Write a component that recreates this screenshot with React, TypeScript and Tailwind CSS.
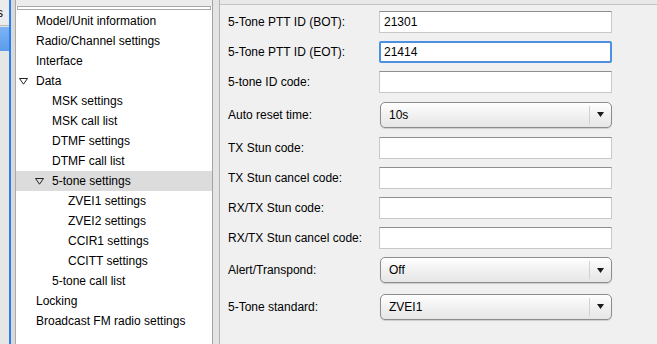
import React from "react";

type Node = { label: string; level: number; open?: boolean; selected?: boolean };

const tree: Node[] = [
  { label: "Model/Unit information", level: 0 },
  { label: "Radio/Channel settings", level: 0 },
  { label: "Interface", level: 0 },
  { label: "Data", level: 0, open: true },
  { label: "MSK settings", level: 1 },
  { label: "MSK call list", level: 1 },
  { label: "DTMF settings", level: 1 },
  { label: "DTMF call list", level: 1 },
  { label: "5-tone settings", level: 1, open: true, selected: true },
  { label: "ZVEI1 settings", level: 2 },
  { label: "ZVEI2 settings", level: 2 },
  { label: "CCIR1 settings", level: 2 },
  { label: "CCITT settings", level: 2 },
  { label: "5-tone call list", level: 1 },
  { label: "Locking", level: 0 },
  { label: "Broadcast FM radio settings", level: 0 },
];

type Field = { label: string; kind: "input" | "select"; value?: string; focus?: boolean; h: string };

const fields: Field[] = [
  { label: "5-Tone PTT ID (BOT):", kind: "input", value: "21301", h: "h-[30px]" },
  { label: "5-Tone PTT ID (EOT):", kind: "input", value: "21414", focus: true, h: "h-[30px]" },
  { label: "5-tone ID code:", kind: "input", h: "h-[30px]" },
  { label: "Auto reset time:", kind: "select", value: "10s", h: "h-[35px]" },
  { label: "TX Stun code:", kind: "input", h: "h-[32px]" },
  { label: "TX Stun cancel code:", kind: "input", h: "h-[28px]" },
  { label: "RX/TX Stun code:", kind: "input", h: "h-[32px]" },
  { label: "RX/TX Stun cancel code:", kind: "input", h: "h-[28px]" },
  { label: "Alert/Transpond:", kind: "select", value: "Off", h: "h-[36px]" },
  { label: "5-Tone standard:", kind: "select", value: "ZVEI1", h: "h-[37px]" },
];

function Disclosure() {
  return (
    <svg width="9" height="7" viewBox="0 0 9 7" className="shrink-0">
      <polygon points="0.5,0.5 8.5,0.5 4.5,6.2" fill="none" stroke="#222" strokeWidth="1" />
    </svg>
  );
}

function TextBox({ value, focus }: { value?: string; focus?: boolean }) {
  if (focus) {
    return (
      <div className="w-[233px] h-[22px] bg-white border-2 border-[#4d8fe0] rounded-[2px] flex items-center pl-[3px] text-black">
        {value}
      </div>
    );
  }
  return (
    <div className="w-[233px] h-[22px] bg-white border border-[#c9c9c9] border-t-[#8f8f8f] flex items-center pl-[4px] text-black">
      {value}
    </div>
  );
}

function Select({ value }: { value?: string }) {
  return (
    <div className="w-[232px] h-[26px] ml-px rounded-[5px] border border-[#8c8c8c] bg-gradient-to-b from-[#ffffff] via-[#f1f1f1] to-[#e6e6e6] shadow-[0_1px_1px_rgba(0,0,0,0.15)] flex items-center text-black">
      <span className="flex-1 pl-[8px]">{value}</span>
      <span className="w-px h-[18px] bg-[#d2d2d2]" />
      <span className="w-[21px] flex justify-center">
        <svg width="7" height="5" viewBox="0 0 7 5">
          <polygon points="0,0 7,0 3.5,5" fill="#1a1a1a" />
        </svg>
      </span>
    </div>
  );
}

export default function App() {
  return (
    <div className="w-[657px] h-[344px] overflow-hidden flex bg-[#e8e8e8] text-[12px] leading-none font-['Liberation_Sans',Arial,sans-serif] text-black">
      {/* cut-off side strip */}
      <div className="w-[9px] flex flex-col bg-[#e6e6e6]">
        <div className="h-[26px] bg-[#ececec] border-b border-[#b8b8b8] flex items-center -ml-[3px] overflow-hidden">
          <span>s</span>
        </div>
        <div className="h-[24px] mt-px bg-gradient-to-b from-[#7db3f2] to-[#5c9ceb]" />
      </div>
      <div className="w-[2px] bg-[#2a7ff0]" />
      <div className="w-[5px] bg-[#d9d9d9] border-r border-[#a9a9a9]" />

      {/* tree */}
      <div className="w-[197px] bg-white border-r border-[#a3a3a3] flex flex-col">
        <div className="h-[6px] bg-[#ececec]" />
        <div className="h-[4px] mx-px border border-[#a8a8a8] bg-white" />
        <div className="pt-px">
          {tree.map((n) => (
            <div
              key={n.label}
              className={`h-[20px] flex items-center ${n.selected ? "bg-[#dcdcdc]" : ""}`}
              style={{ paddingLeft: 3 + n.level * 16 }}
            >
              <span className="w-[17px] flex items-center">{n.open && <Disclosure />}</span>
              <span className="whitespace-nowrap">{n.label}</span>
            </div>
          ))}
        </div>
      </div>

      {/* splitter */}
      <div className="w-[7px] bg-[#e4e4e4] border-r border-[#b3b3b3]" />

      {/* form */}
      <div className="flex-1 bg-[#f0f0f0] border-t border-[#c4c4c4] mt-[4px] pl-[8px] pt-[2px]">
        {fields.map((f) => (
          <div key={f.label} className={`${f.h} flex items-center`}>
            <span className="w-[151px] whitespace-nowrap">{f.label}</span>
            {f.kind === "input" ? <TextBox value={f.value} focus={f.focus} /> : <Select value={f.value} />}
          </div>
        ))}
      </div>
    </div>
  );
}
